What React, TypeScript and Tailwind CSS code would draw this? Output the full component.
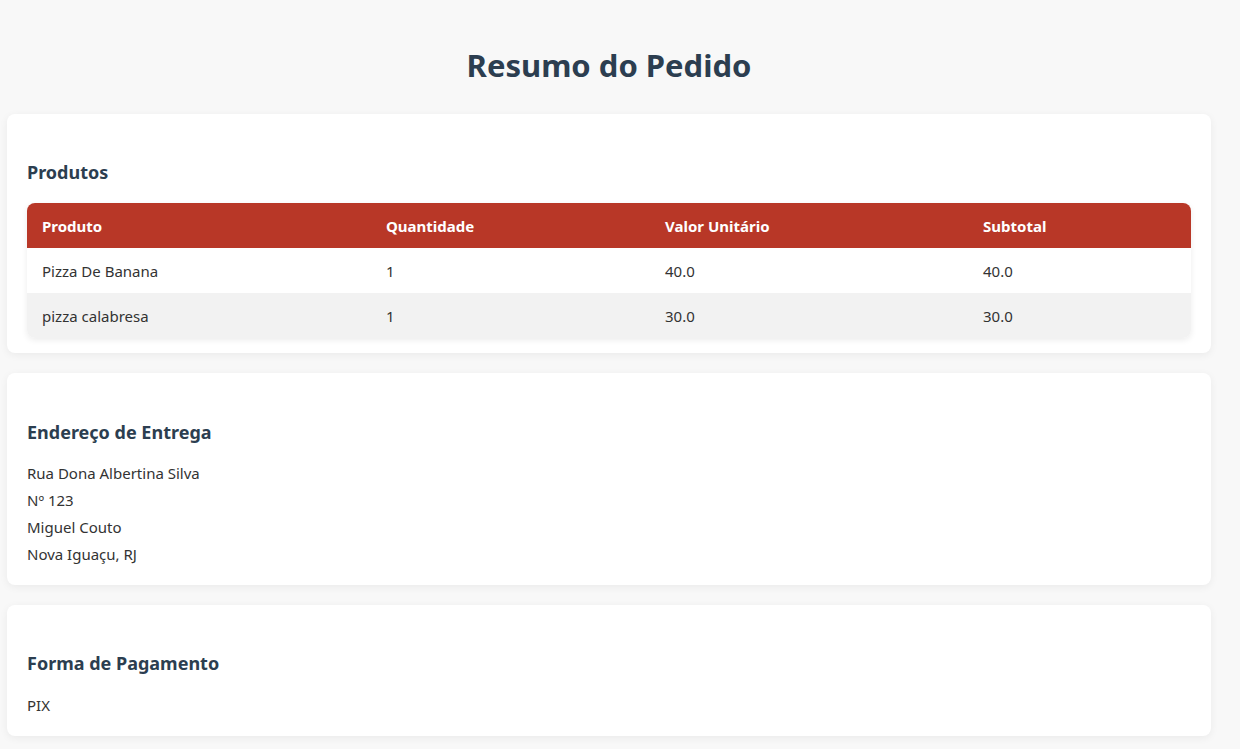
import React from 'react';

const items = [
  { name: 'Pizza De Banana', qty: 1, unit: '40.0', subtotal: '40.0' },
  { name: 'pizza calabresa', qty: 1, unit: '30.0', subtotal: '30.0' },
];

const address = ['Rua Dona Albertina Silva', 'Nº 123', 'Miguel Couto', 'Nova Iguaçu, RJ'];

const Card: React.FC<{ title: string; children: React.ReactNode; className?: string }> = ({ title, children, className }) => (
  <section className={`bg-white rounded-lg shadow-[0_2px_8px_rgba(0,0,0,0.06)] px-5 ${className ?? ''}`}>
    <h3 className="text-[18px] leading-[27px] font-bold text-[#2c3e50]">{title}</h3>
    {children}
  </section>
);

export default function App() {
  return (
    <div className="min-h-screen bg-[#f8f8f8] text-[#333] font-['Segoe_UI','Noto_Sans',sans-serif]">
      <div className="w-[1204px] ml-[7px] pt-[45px] pb-10">
        <h1 className="text-center text-[31px] leading-[40px] font-bold text-[#2c3e50] mb-[29px]">Resumo do Pedido</h1>

        <div className="flex flex-col gap-5">
          <Card title="Produtos" className="pt-[45px] pb-[15px]">
            <table className="w-full mt-[17px] border-collapse rounded-lg overflow-hidden shadow-[0_2px_6px_rgba(0,0,0,0.08)] text-[15px]">
              <thead>
                <tr className="bg-[#b83727] text-white h-[45px]">
                  <th className="w-[344px] text-left font-bold px-[15px] pt-px">Produto</th>
                  <th className="w-[279px] text-left font-bold px-[15px] pt-px">Quantidade</th>
                  <th className="w-[318px] text-left font-bold px-[15px] pt-px">Valor Unitário</th>
                  <th className="text-left font-bold px-[15px] pt-px">Subtotal</th>
                </tr>
              </thead>
              <tbody>
                {items.map((it, i) => (
                  <tr key={it.name} className={`h-[45px] ${i % 2 === 1 ? 'bg-[#f2f2f2]' : 'bg-white'}`}>
                    <td className="px-[15px] pt-px">{it.name}</td>
                    <td className="px-[15px] pt-px">{it.qty}</td>
                    <td className="px-[15px] pt-px">{it.unit}</td>
                    <td className="px-[15px] pt-px">{it.subtotal}</td>
                  </tr>
                ))}
              </tbody>
            </table>
          </Card>

          <Card title="Endereço de Entrega" className="pt-[46px] pb-[17px]">
            <div className="mt-[14px] text-[15px] leading-[27px]">
              {address.map((line) => (
                <p key={line}>{line}</p>
              ))}
            </div>
          </Card>

          <Card title="Forma de Pagamento" className="pt-[45px] pb-[17px]">
            <p className="mt-[15px] text-[15px] leading-[27px]">PIX</p>
          </Card>
        </div>
      </div>
    </div>
  );
}
